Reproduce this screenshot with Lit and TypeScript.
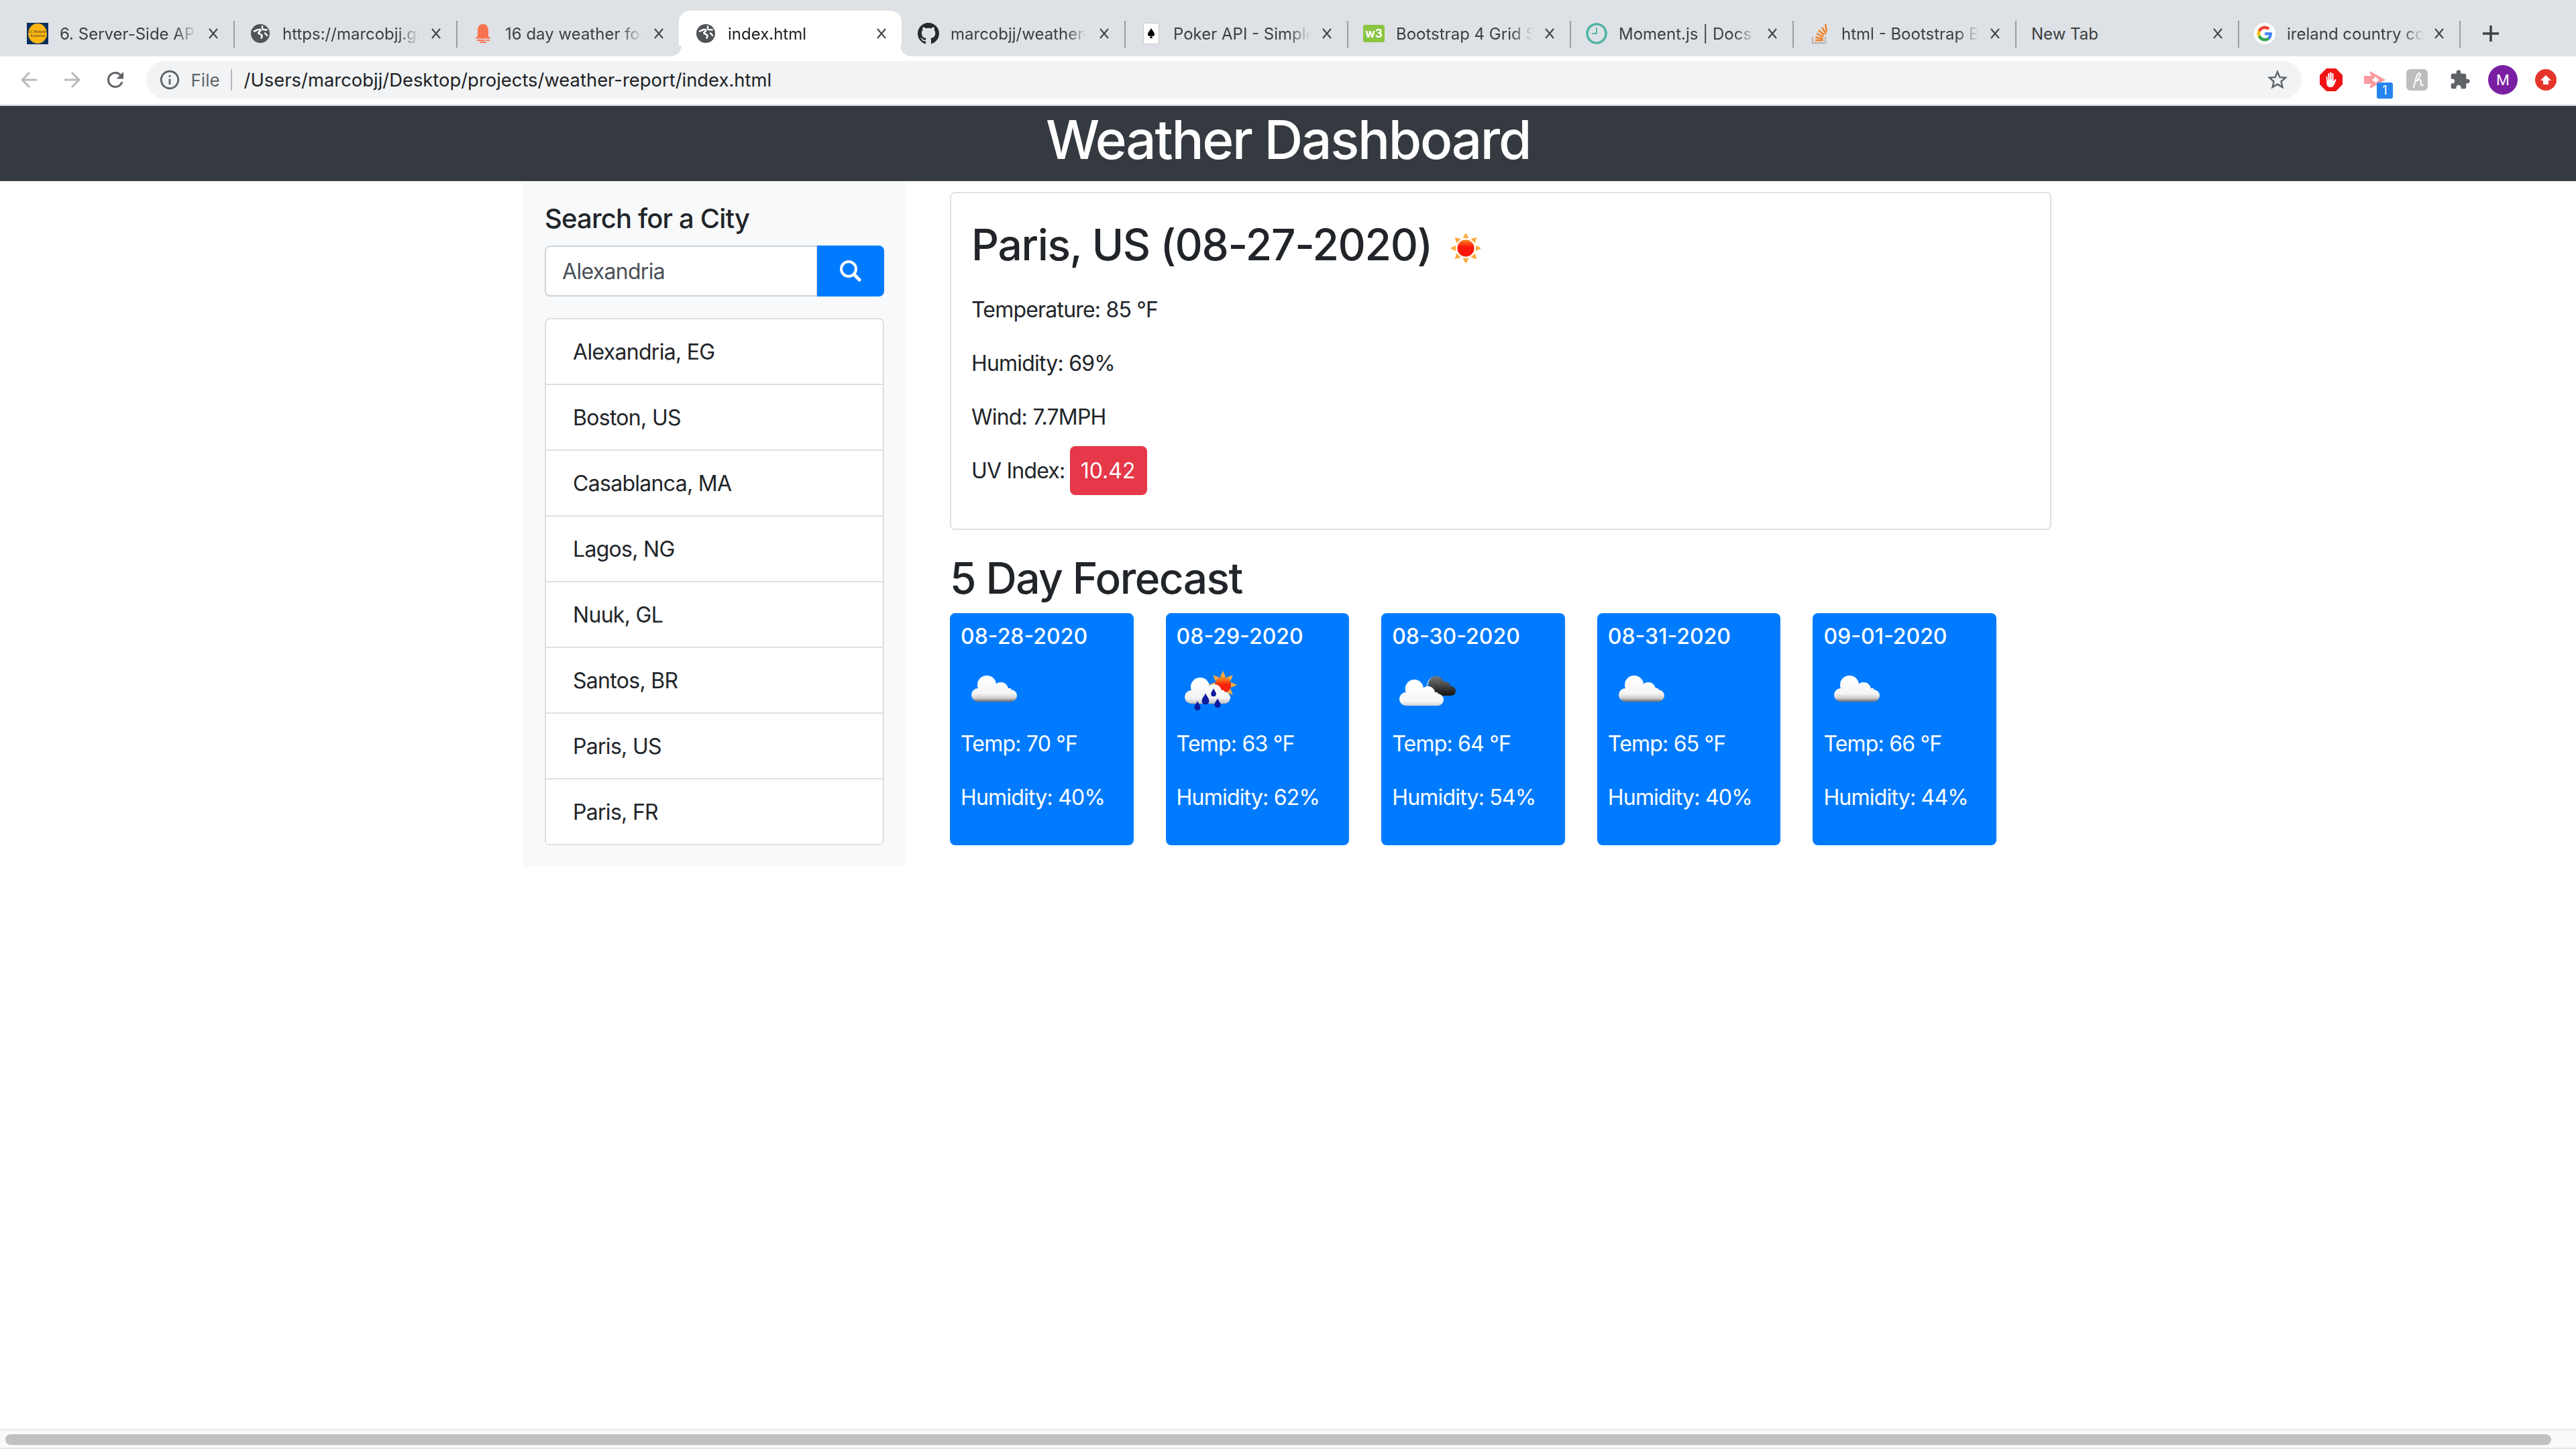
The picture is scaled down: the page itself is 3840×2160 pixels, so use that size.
import { LitElement, html, css, svg } from "lit";
import { customElement } from "lit/decorators.js";

const FAVICONS: Record<string, unknown> = {
  berkeley: html`<svg width="32" height="32" viewBox="0 0 32 32">
    <rect width="32" height="32" fill="#0b2f5c" />
    <ellipse cx="16" cy="16" rx="14" ry="15" fill="#fdb515" />
    <text x="16" y="14.5" font-size="5.5" text-anchor="middle" fill="#3a3a20" font-family="Liberation Serif, serif">UC Berkeley</text>
    <text x="16" y="20.5" font-size="5.5" text-anchor="middle" fill="#3a3a20" font-family="Liberation Serif, serif">Extension</text>
  </svg>`,
  globe: html`<svg width="32" height="32" viewBox="0 0 32 32">
    <circle cx="16" cy="16" r="14" fill="#505357" />
    <g fill="none" stroke="#fff" stroke-width="2.600" stroke-linecap="round">
      <path d="M7 12.500c3-.5 5-3 8-2.500 2.500.5 1 3-1 4-2 1.500 1 3 3 3.500 2.500 1 1.500 3.500.5 5" />
      <path d="M19 5.500c.5 2-1 3.500 1 4.500 2 .5 4 0 5.500 .5" />
      <path d="M23 15.500c1.500 1 2.500 2.500 3 3.500" />
    </g>
  </svg>`,
  bell: html`<svg width="32" height="32" viewBox="0 0 32 32" fill="#f8734f">
    <path d="M16 2c-6 0-8 5-8 10v9h-2.500v2.500h21V21H24v-9c0-5-2-10-8-10z" />
    <rect x="7" y="25" width="12" height="2" />
    <rect x="21" y="25" width="5" height="2" />
    <rect x="11" y="28" width="10" height="2" />
  </svg>`,
  github: html`<svg width="32" height="32" viewBox="0 0 16 16">
    <path fill="#24292e" d="M8 0C3.58 0 0 3.58 0 8c0 3.54 2.29 6.53 5.47 7.59.4.07.55-.17.55-.38 0-.19-.01-.82-.01-1.49-2.01.37-2.53-.49-2.69-.94-.09-.23-.48-.94-.82-1.13-.28-.15-.68-.52-.01-.53.63-.01 1.08.58 1.23.82.72 1.21 1.87.87 2.33.66.07-.52.28-.87.51-1.07-1.78-.2-3.64-.89-3.64-3.95 0-.87.31-1.59.82-2.15-.08-.2-.36-1.02.08-2.12 0 0 .67-.21 2.2.82.64-.18 1.32-.27 2-.27.68 0 1.36.09 2 .27 1.53-1.04 2.2-.82 2.2-.82.44 1.1.16 1.92.08 2.12.51.56.82 1.27.82 2.15 0 3.07-1.87 3.75-3.65 3.95.29.25.54.73.54 1.48 0 1.07-.01 1.93-.01 2.2 0 .21.15.46.55.38A8.013 8.013 0 0016 8c0-4.42-3.58-8-8-8z" />
  </svg>`,
  card: html`<svg width="32" height="32" viewBox="0 0 32 32">
    <rect x="4.500" y="0.500" width="23" height="31" fill="#fff" stroke="#c8c8c8" />
    <path fill="#000" d="M16 8c-2 4-5 6-5 9.500 0 2.500 3 3.500 4.300 1.500-.2 2-.8 3-1.800 4h5c-1-1-1.600-2-1.800-4 1.300 2 4.300 1 4.300-1.500C21 14 18 12 16 8z" />
  </svg>`,
  w3: html`<svg width="32" height="32" viewBox="0 0 32 32">
    <rect y="3" width="32" height="26" rx="3" fill="#8ac440" />
    <text x="16" y="22" font-size="17" font-weight="700" text-anchor="middle" fill="#fff" font-family="Inter, sans-serif">w3</text>
  </svg>`,
  moment: html`<svg width="32" height="32" viewBox="0 0 32 32" fill="none" stroke="#4fb5a5">
    <circle cx="16" cy="16" r="14" stroke-width="3.500" />
    <path d="M16 7v9h-7" stroke-width="1.800" />
  </svg>`,
  so: html`<svg width="32" height="32" viewBox="0 0 32 32" fill="none">
    <path d="M6 21v9h19v-9" stroke="#b9b9b9" stroke-width="2.500" />
    <path d="M10 26h12M10.500 21.500l11 2.200M12 16l10 5M15 11l8.500 7.500M20 7l6 9.500M25 2l2 11" stroke="#f48024" stroke-width="2.500" />
  </svg>`,
  google: html`<svg width="32" height="32" viewBox="0 0 48 48">
    <circle cx="24" cy="24" r="24" fill="#fff" />
    <g transform="translate(7 7) scale(.71)">
      <path fill="#ea4335" d="M24 9.500c3.500 0 6.700 1.200 9.200 3.600l6.900-6.900C35.900 2.400 30.500 0 24 0 14.600 0 6.500 5.400 2.600 13.200l8 6.200C12.400 13.700 17.700 9.500 24 9.500z" />
      <path fill="#4285f4" d="M46.900 24.500c0-1.600-.1-3.100-.4-4.500H24v9h12.900c-.6 3-2.200 5.500-4.800 7.200l7.700 6c4.500-4.200 7.100-10.300 7.100-17.700z" />
      <path fill="#fbbc05" d="M10.500 28.600c-.5-1.400-.8-3-.8-4.600s.3-3.200.8-4.600l-8-6.200C.9 16.500 0 20.100 0 24s.9 7.500 2.600 10.800l7.900-6.200z" />
      <path fill="#34a853" d="M24 48c6.500 0 11.900-2.100 15.900-5.800l-7.700-6c-2.200 1.400-4.900 2.300-8.200 2.300-6.300 0-11.600-4.200-13.500-9.900l-8 6.200C6.500 42.600 14.600 48 24 48z" />
    </g>
  </svg>`,
};

const TABS = [
  { title: "6. Server-Side API", icon: "berkeley" },
  { title: "https://marcobjj.github.io", icon: "globe" },
  { title: "16 day weather forecast", icon: "bell" },
  { title: "index.html", icon: "globe", active: true },
  { title: "marcobjj/weather-report", icon: "github" },
  { title: "Poker API - Simple", icon: "card" },
  { title: "Bootstrap 4 Grid System", icon: "w3" },
  { title: "Moment.js | Docs", icon: "moment" },
  { title: "html - Bootstrap Button", icon: "so" },
  { title: "New Tab" },
  { title: "ireland country code", icon: "google", last: true },
];

const CITIES = [
  "Alexandria, EG",
  "Boston, US",
  "Casablanca, MA",
  "Lagos, NG",
  "Nuuk, GL",
  "Santos, BR",
  "Paris, US",
  "Paris, FR",
];

const FORECAST = [
  { date: "08-28-2020", icon: "cloud", temp: 70, hum: 40 },
  { date: "08-29-2020", icon: "rain", temp: 63, hum: 62 },
  { date: "08-30-2020", icon: "dark", temp: 64, hum: 54 },
  { date: "08-31-2020", icon: "cloud", temp: 65, hum: 40 },
  { date: "09-01-2020", icon: "cloud", temp: 66, hum: 44 },
];

const cloudShape = (dx: number, dy: number, fill: string) => svg`
  <g transform="translate(${dx} ${dy})" fill="${fill}">
    <circle cx="26" cy="58" r="10" />
    <circle cx="39" cy="43" r="14" />
    <circle cx="60" cy="50" r="11" />
    <circle cx="75" cy="59" r="9" />
    <rect x="26" y="48" width="49" height="20" />
  </g>`;

const sunRays = (cx: number, cy: number, r0: number, r1: number, w: number) =>
  [0, 45, 90, 135, 180, 225, 270, 315].map(
    (a) => svg`<path fill="#fbaa3c" transform="rotate(${a} ${cx} ${cy})"
      d="M${cx - w} ${cy - r0}L${cx} ${cy - r1}L${cx + w} ${cy - r0}z" />`
  );

const drop = (x: number, y: number, s: number) => svg`
  <path fill="#0a1a9c" transform="translate(${x} ${y}) scale(${s})"
    d="M0-9C1.500-5 4.500-3 4.500 .8 4.500 3.500 2.500 5 0 5S-4.500 3.500-4.500 .8C-4.500-3-1.500-5 0-9z" />`;

const WEATHER: Record<string, unknown> = {
  cloud: html`<svg class="weather" viewBox="0 0 100 100">
    <defs>
      <linearGradient id="w1" gradientUnits="userSpaceOnUse" x1="0" y1="29" x2="0" y2="68">
        <stop offset="0" stop-color="#fff" /><stop offset=".68" stop-color="#f6f6f6" />
        <stop offset=".86" stop-color="#cfcfcf" /><stop offset="1" stop-color="#6d6d6d" />
      </linearGradient>
      <filter id="b1"><feGaussianBlur stdDeviation=".7" /></filter>
    </defs>
    <g filter="url(#b1)">${cloudShape(0, 0, "url(#w1)")}</g>
  </svg>`,
  rain: html`<svg class="weather" viewBox="0 0 100 100">
    <defs>
      <linearGradient id="w2" gradientUnits="userSpaceOnUse" x1="0" y1="32" x2="0" y2="71">
        <stop offset="0" stop-color="#fff" /><stop offset=".7" stop-color="#f4f4f4" />
        <stop offset=".87" stop-color="#cfcfcf" /><stop offset="1" stop-color="#777" />
      </linearGradient>
      <linearGradient id="s2" x1="0" y1="0" x2="0" y2="1">
        <stop offset="0" stop-color="#fb9a20" /><stop offset=".5" stop-color="#f8200c" />
      </linearGradient>
      <filter id="b2"><feGaussianBlur stdDeviation=".5" /></filter>
    </defs>
    <g filter="url(#b2)">
      ${sunRays(69, 43, 12, 21, 4)}
      <circle cx="69" cy="43" r="12" fill="url(#s2)" />
      ${cloudShape(-4, 3, "url(#w2)")}
      ${drop(31, 76, 1)} ${drop(43, 66, 1.200)} ${drop(61, 72, 1)} ${drop(55, 56, .85)}
    </g>
  </svg>`,
  dark: html`<svg class="weather" viewBox="0 0 100 100">
    <defs>
      <linearGradient id="w3" gradientUnits="userSpaceOnUse" x1="0" y1="35" x2="0" y2="74">
        <stop offset="0" stop-color="#fff" /><stop offset=".68" stop-color="#f6f6f6" />
        <stop offset=".86" stop-color="#cfcfcf" /><stop offset="1" stop-color="#6d6d6d" />
      </linearGradient>
      <linearGradient id="d3" gradientUnits="userSpaceOnUse" x1="0" y1="30" x2="0" y2="59">
        <stop offset="0" stop-color="#777" /><stop offset="1" stop-color="#111" />
      </linearGradient>
      <filter id="b3"><feGaussianBlur stdDeviation=".5" /></filter>
    </defs>
    <g filter="url(#b3)">
      <path fill="none" stroke="#c9c9c9" stroke-width="1.500" d="M52 48c0-10 6-17 14-17" />
      <circle cx="66" cy="41" r="11" fill="url(#d3)" />
      <circle cx="79" cy="46" r="8" fill="url(#d3)" />
      <circle cx="88" cy="52" r="7" fill="url(#d3)" />
      <rect x="62" y="44" width="26" height="15" fill="url(#d3)" />
      <g transform="translate(11 35) scale(.97 1) translate(-16 -29)">${cloudShape(0, 0, "url(#w3)")}</g>
    </g>
  </svg>`,
};

@customElement("app-root")
export class AppRoot extends LitElement {
  static styles = css`
    :host {
      display: flex;
      flex-direction: column;
      height: 2160px;
      background: #fff;
      font-family: Inter, "Noto Sans", sans-serif;
      color: #212529;
    }
    * {
      box-sizing: border-box;
    }

    /* browser chrome */
    .tabstrip {
      display: flex;
      height: 84px;
      padding-left: 16px;
      background: #dee1e6;
      flex: none;
    }
    .tab {
      position: relative;
      display: flex;
      align-items: center;
      width: 332px;
      height: 68px;
      margin-top: 16px;
      padding-left: 24px;
      font-size: 24px;
      color: #3c4043;
      flex: none;
    }
    .tab.last {
      width: 330px;
    }
    .tab.active {
      background: #fff;
      border-radius: 16px 16px 0 0;
      color: #202124;
    }
    .tab.active::before,
    .tab.active::after {
      content: "";
      position: absolute;
      bottom: 0;
      width: 16px;
      height: 16px;
      background: radial-gradient(circle at 0 0, #dee1e6 15.500px, #fff 16px);
    }
    .tab.active::before {
      left: -12px;
    }
    .tab.active::after {
      right: -14px;
      transform: scaleX(-1);
    }
    .sep {
      position: absolute;
      top: 15px;
      right: -2px;
      width: 2px;
      height: 40px;
      background: #9a9da1;
    }
    .fav {
      width: 32px;
      height: 32px;
      margin-right: 17px;
      flex: none;
    }
    .fav svg {
      display: block;
    }
    .tab-title {
      width: 206px;
      white-space: nowrap;
      overflow: hidden;
      -webkit-mask-image: linear-gradient(to right, #000 172px, transparent 204px);
      mask-image: linear-gradient(to right, #000 172px, transparent 204px);
    }
    .tab.plain .tab-title {
      -webkit-mask-image: none;
      mask-image: none;
    }
    .close {
      display: block;
      margin-left: auto;
      margin-right: 22px;
      flex: none;
    }
    .plus {
      display: block;
      margin: 35px 0 0 32px;
    }
    .toolbar {
      display: flex;
      align-items: center;
      height: 74px;
      padding: 0 13px 2px 11px;
      border-bottom: 2px solid #d1d3d6;
      flex: none;
    }
    .nav {
      display: flex;
      justify-content: center;
      width: 64.500px;
      flex: none;
    }
    .omnibox {
      display: flex;
      align-items: center;
      flex: 1;
      height: 56px;
      margin: 0 12px 0 13px;
      padding: 0 18px 0 18px;
      border-radius: 28px;
      background: #f1f3f4;
    }
    .scheme {
      margin-left: 15px;
      font-size: 26px;
      color: #5f6368;
    }
    .divider {
      width: 2px;
      height: 32px;
      margin: 0 18px 0 16px;
      background: #b4b6b9;
    }
    .url {
      font-size: 27.400px;
      color: #202124;
    }
    .star {
      margin-left: auto;
    }
    .ext {
      position: relative;
      display: flex;
      justify-content: center;
      width: 64px;
      flex: none;
    }
    .ext svg {
      display: block;
    }
    .ext-badge {
      position: absolute;
      top: 20px;
      left: 36px;
      width: 24px;
      height: 24px;
      border-radius: 3px;
      background: #2585f0;
      color: #fff;
      font-size: 18px;
      line-height: 24px;
      text-align: center;
    }
    .avatar {
      width: 44px;
      height: 44px;
      border-radius: 50%;
      background: #7b1fa2;
      color: #fff;
      font-size: 22px;
      line-height: 44px;
      text-align: center;
    }

    /* page */
    .jumbo {
      height: 112px;
      padding-top: 2px;
      background: #343a40;
      color: #fff;
      text-align: center;
      font-size: 80px;
      font-weight: 500;
      letter-spacing: -2.300px;
      line-height: 96px;
      flex: none;
    }
    .content {
      display: flex;
      align-items: flex-start;
      width: 2280px;
      margin: 0 auto;
      flex: 1;
    }
    .sidebar {
      width: 570px;
      padding: 32px;
      background: #f8f9fa;
      flex: none;
    }
    .sidebar h5 {
      margin: 0 0 16px;
      font-size: 40px;
      font-weight: 500;
      letter-spacing: -0.850px;
      line-height: 48px;
    }
    .search {
      display: flex;
      height: 76px;
      margin-bottom: 32px;
    }
    .search input {
      flex: 1;
      min-width: 0;
      padding: 0 24px;
      border: 2px solid #ced4da;
      border-right-width: 1px;
      border-radius: 8px 0 0 8px;
      background: #fff;
      color: #495057;
      font: 32px Inter, sans-serif;
      letter-spacing: -0.700px;
      outline: none;
    }
    .search button {
      display: flex;
      align-items: center;
      justify-content: center;
      width: 100px;
      padding: 0;
      border: 0;
      border-radius: 0 8px 8px 0;
      background: #007bff;
    }
    .cities {
      border: 2px solid #dfdfdf;
      border-bottom-width: 0;
      border-radius: 8px;
      overflow: hidden;
      background: #fff;
    }
    .cities div {
      height: 98px;
      padding: 25px 40px 0;
      border-bottom: 2px solid #dfdfdf;
      font-size: 32px;
      letter-spacing: -0.700px;
      line-height: 48px;
    }
    .main {
      flex: 1;
      padding: 16px 2px 0 66px;
    }
    .today {
      height: 504px;
      margin-bottom: 32px;
      padding: 32px 32px 32px 30px;
      border: 2px solid #dfe2e5;
      border-radius: 8px;
    }
    h2 {
      margin: 0;
      font-size: 64px;
      font-weight: 500;
      letter-spacing: -1.350px;
      line-height: 76px;
    }
    .today h2 {
      display: flex;
      height: 100px;
      margin-bottom: 16px;
      padding-top: 7px;
    }
    .today h2 svg {
      width: 100px;
      height: 100px;
      margin: -7px 0 0 0;
    }
    .today p,
    .day p {
      margin: 0 0 30px;
      padding-top: 2px;
      font-size: 32px;
      letter-spacing: -0.800px;
      line-height: 48px;
    }
    .uv {
      margin-left: -1px;
      padding: 16.600px 18px 16.600px 16px;
      border-radius: 8px;
      background: #e53848;
      color: #fff;
      letter-spacing: 0;
    }
    .forecast-title {
      margin-bottom: 14px;
      padding-top: 2px;
      letter-spacing: -1.550px;
    }
    .days {
      display: flex;
      gap: 48px;
    }
    .day {
      width: 273.600px;
      height: 346px;
      padding: 16px;
      border-radius: 8px;
      background: #007bff;
      color: #fff;
    }
    .day .date {
      margin-bottom: 9.600px;
      font-size: 32px;
      font-weight: 500;
      line-height: 38.400px;
    }
    .weather {
      display: block;
      width: 100px;
      height: 100px;
      margin-bottom: 5.400px;
    }

    .scrollbar {
      height: 30px;
      padding: 6px 37px 4px 8px;
      border-top: 2px solid #e7e7e7;
      border-bottom: 2px solid #e7e7e7;
      background: #fafafa;
      flex: none;
    }
    .thumb {
      height: 16px;
      border-radius: 8px;
      background: #c1c1c1;
    }
  `;

  renderTab(tab: (typeof TABS)[number], i: number) {
    const next = TABS[i + 1];
    const showSep = !tab.active && !next?.active;
    const classes = `tab ${tab.active ? "active" : ""} ${tab.last ? "last" : ""} ${tab.icon ? "" : "plain"}`;
    return html`<div class="${classes}">
      ${tab.icon ? html`<span class="fav">${FAVICONS[tab.icon]}</span>` : ""}
      <span class="tab-title">${tab.title}</span>
      <svg class="close" width="16" height="16" viewBox="0 0 16 16" fill="none" stroke="#45484c" stroke-width="2.200">
        <path d="M2 1l12 14M14 1L2 15" />
      </svg>
      ${showSep ? html`<span class="sep"></span>` : ""}
    </div>`;
  }

  renderToolbar() {
    return html`<div class="toolbar">
      <span class="nav"><svg width="36" height="36" viewBox="0 0 24 24"><path fill="#b9babc" d="M20 11H7.830l5.590-5.590L12 4l-8 8 8 8 1.410-1.410L7.830 13H20v-2z" /></svg></span>
      <span class="nav"><svg width="36" height="36" viewBox="0 0 24 24"><path fill="#b9babc" d="M12 4l-1.410 1.410L16.170 11H4v2h12.170l-5.580 5.590L12 20l8-8z" /></svg></span>
      <span class="nav"><svg width="36" height="36" viewBox="0 0 24 24"><path fill="#5f6368" d="M17.650 6.350C16.200 4.900 14.210 4 12 4c-4.420 0-7.990 3.580-7.990 8s3.570 8 7.990 8c3.730 0 6.840-2.550 7.730-6h-2.080c-.82 2.330-3.040 4-5.650 4-3.310 0-6-2.690-6-6s2.690-6 6-6c1.660 0 3.140.69 4.220 1.780L13 11h7V4l-2.350 2.350z" /></svg></span>
      <div class="omnibox">
        <svg width="34" height="34" viewBox="0 0 24 24"><path fill="#5f6368" d="M11 7h2v2h-2zm0 4h2v6h-2zm1-9C6.480 2 2 6.480 2 12s4.480 10 10 10 10-4.480 10-10S17.520 2 12 2zm0 18c-4.410 0-8-3.590-8-8s3.590-8 8-8 8 3.590 8 8-3.590 8-8 8z" /></svg>
        <span class="scheme">File</span>
        <span class="divider"></span>
        <span class="url">/Users/marcobjj/Desktop/projects/weather-report/index.html</span>
        <svg class="star" width="36" height="36" viewBox="0 0 24 24"><path fill="#5f6368" d="M22 9.240l-7.190-.62L12 2 9.190 8.630 2 9.240l5.460 4.730L5.820 21 12 17.270 18.180 21l-1.630-7.030L22 9.240zM12 15.400l-3.760 2.270 1-4.280-3.320-2.880 4.380-.38L12 6.100l1.710 4.040 4.380.38-3.320 2.880 1 4.280L12 15.400z" /></svg>
      </div>
      <span class="ext">
        <svg width="34" height="34" viewBox="0 0 34 34">
          <path fill="#f01414" d="M10 0h14l10 10v14L24 34H10L0 24V10z" />
          <path fill="#fff" d="M9.500 13c0-1.500 2-1.500 2 0v5h.800V8c0-1.500 2.200-1.500 2.200 0v8.500h.800V6.500c0-1.500 2.200-1.500 2.200 0v10h.800V8c0-1.500 2.200-1.500 2.200 0v11.500l1.800-2.800c1-1.300 2.800-.4 2.100 1l-3.200 7.300c-1 2-2.500 3-5 3-3.500 0-5.700-2-5.700-5z" />
        </svg>
      </span>
      <span class="ext">
        <svg width="34" height="32" viewBox="0 0 34 32">
          <path fill="#fb9aa0" d="M11 3l23 13-23 13zM2 10h12v12H2z" />
          <path fill="#fff" d="M14 16l5-5 5 5-5 5zM8 4l6 6H8zM8 22h6l-6 6z" />
          <path fill="#fb9aa0" d="M14 10h4v4h-4zM14 18h4v4h-4z" />
        </svg>
        <span class="ext-badge">1</span>
      </span>
      <span class="ext">
        <svg width="32" height="32" viewBox="0 0 32 32">
          <rect width="32" height="32" rx="6" fill="#bdbdbd" />
          <path fill="none" stroke="#fff" stroke-width="2" stroke-linecap="round" d="M11 27C14 18 15 6 19.500 6c3 0 1 7-5 12.500 3-3 7.500-4 7.500 0 0 3-1.500 7 3 5.500" />
        </svg>
      </span>
      <span class="ext">
        <svg width="32" height="32" viewBox="0 0 24 24"><path fill="#5f6368" d="M20.500 11H19V7c0-1.100-.9-2-2-2h-4V3.500C13 2.120 11.880 1 10.500 1S8 2.120 8 3.500V5H4c-1.100 0-1.990.9-1.990 2v3.800H3.500c1.490 0 2.700 1.210 2.700 2.700s-1.210 2.700-2.700 2.700H2V20c0 1.100.9 2 2 2h3.800v-1.500c0-1.490 1.210-2.700 2.700-2.700 1.490 0 2.700 1.210 2.700 2.700V22H17c1.100 0 2-.9 2-2v-4h1.500c1.380 0 2.500-1.120 2.500-2.500S21.880 11 20.500 11z" /></svg>
      </span>
      <span class="ext"><span class="avatar">M</span></span>
      <span class="ext">
        <svg width="32" height="32" viewBox="0 0 32 32">
          <circle cx="16" cy="16" r="16" fill="#e5352b" />
          <path fill="#fff" d="M16 9l8 8h-4v6h-8v-6H8z" />
        </svg>
      </span>
    </div>`;
  }

  render() {
    return html`
      <div class="tabstrip">
        ${TABS.map((t, i) => this.renderTab(t, i))}
        <svg class="plus" width="30" height="30" viewBox="0 0 30 30" fill="none" stroke="#3c4043" stroke-width="3.500">
          <path d="M15 3v24M3 15h24" />
        </svg>
      </div>
      ${this.renderToolbar()}
      <div class="jumbo">Weather Dashboard</div>
      <div class="content">
        <aside class="sidebar">
          <h5>Search for a City</h5>
          <div class="search">
            <input type="text" value="Alexandria" />
            <button>
              <svg width="34" height="34" viewBox="0 0 34 34" fill="none" stroke="#fff" stroke-width="4">
                <circle cx="14" cy="14" r="11" />
                <path d="M22 22l8 8" stroke-linecap="round" stroke-width="5" />
              </svg>
            </button>
          </div>
          <div class="cities">${CITIES.map((c) => html`<div>${c}</div>`)}</div>
        </aside>
        <main class="main">
          <section class="today">
            <h2>
              Paris, US (08-27-2020)
              <svg viewBox="0 0 100 100">
                <defs>
                  <linearGradient id="sun" x1="0" y1="0" x2="0" y2="1">
                    <stop offset="0" stop-color="#fb8a20" /><stop offset=".45" stop-color="#fb1208" />
                  </linearGradient>
                  <filter id="soft"><feGaussianBlur stdDeviation=".6" /></filter>
                </defs>
                <g filter="url(#soft)">
                  ${sunRays(50, 50, 15, 23, 4.500)}
                  <circle cx="50" cy="50" r="13" fill="url(#sun)" stroke="#fde3c0" stroke-width="1" />
                </g>
              </svg>
            </h2>
            <p>Temperature: 85 °F</p>
            <p>Humidity: 69%</p>
            <p>Wind: 7.7MPH</p>
            <p>UV Index: <span class="uv">10.42</span></p>
          </section>
          <h2 class="forecast-title">5 Day Forecast</h2>
          <div class="days">
            ${FORECAST.map(
              (d) => html`<div class="day">
                <div class="date">${d.date}</div>
                ${WEATHER[d.icon]}
                <p>Temp: ${d.temp} °F</p>
                <p>Humidity: ${d.hum}%</p>
              </div>`
            )}
          </div>
        </main>
      </div>
      <div class="scrollbar"><div class="thumb"></div></div>
    `;
  }
}
